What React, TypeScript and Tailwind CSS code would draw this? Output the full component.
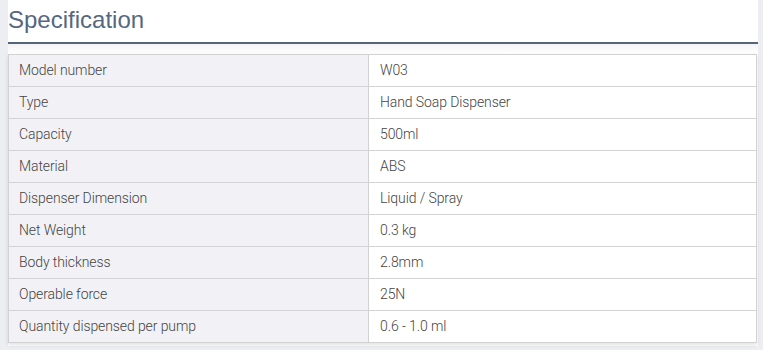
import React from "react";

const rows: [string, string][] = [
  ["Model number", "W03"],
  ["Type", "Hand Soap Dispenser"],
  ["Capacity", "500ml"],
  ["Material", "ABS"],
  ["Dispenser Dimension", "Liquid / Spray"],
  ["Net Weight", "0.3 kg"],
  ["Body thickness", "2.8mm"],
  ["Operable force", "25N"],
  ["Quantity dispensed per pump", "0.6 - 1.0 ml"],
];

export default function App() {
  return (
    <div className="w-[763px] h-[350px] bg-[#eceef2] overflow-hidden">
      <div className="ml-[8px] w-[750px] h-[346px] bg-white">
        <div className="h-[42px] pt-[4px] text-[24px] leading-[32px] text-[#56677f] font-['Liberation_Sans',Arial,sans-serif]">
          Specification
        </div>
        <div className="h-[2px] bg-[#566477]" />
        <div className="h-[10px] bg-gradient-to-b from-[#f3f3f5] to-white" />
        <div className="w-[749px] border border-[#d2d2d4] shadow-[0_2px_4px_rgba(0,0,0,0.12)] font-['Roboto',sans-serif] text-[14px] font-light tracking-[-0.1px] text-[#444]">
          {rows.map(([k, v], i) => (
            <div
              key={k}
              className={`flex ${i > 0 ? "h-[32px] border-t border-[#d2d2d4]" : "h-[31px]"}`}
            >
              <div className="w-[360px] bg-[#f2f2f6] border-r border-[#d2d2d4] flex items-center pl-[10px]">
                {k}
              </div>
              <div className="flex-1 flex items-center pl-[11px] bg-white">{v}</div>
            </div>
          ))}
        </div>
      </div>
    </div>
  );
}
